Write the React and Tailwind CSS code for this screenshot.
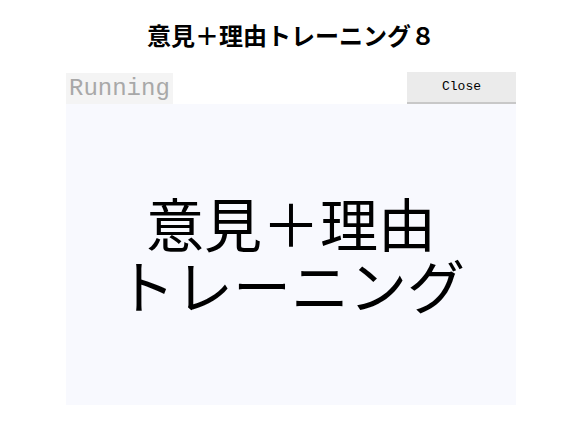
export default function App() {
  return (
    <div className="min-h-[446px] bg-white pl-[6px]" style={{ fontFamily: '"Noto Sans CJK JP", "Noto Sans", sans-serif' }}>
      <h1 className="pt-[19px] text-center text-[24px] font-bold leading-[32px] text-black">
        意見＋理由トレーニング８
      </h1>

      <div className="mx-auto mt-[21px] w-[450px]">
        <div className="flex items-end justify-between">
          <div className="flex h-[31px] items-center bg-[#f4f4f4] px-[3px] font-['Liberation_Mono',monospace] text-[24px] text-[#a8a8a8]">
            Running
          </div>
          <button className="h-[32px] w-[109px] border-b-[2px] border-[#c8c8c8] bg-[#ebebeb] font-['Liberation_Mono',monospace] text-[13px] text-black">
            Close
          </button>
        </div>

        <div className="flex h-[301px] flex-col items-center justify-center bg-[#f8f9fe] pb-[4px] text-center text-[58px] leading-[62px] text-black">
          <div className="whitespace-nowrap">意見＋理由</div>
          <div className="whitespace-nowrap">トレーニング</div>
        </div>
      </div>
    </div>
  )
}
